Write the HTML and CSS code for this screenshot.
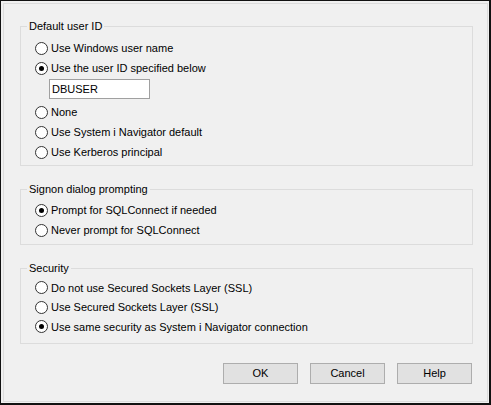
FILE: index.html
```html
<!DOCTYPE html>
<html>
<head>
<meta charset="utf-8">
<link rel="stylesheet" href="styles.css">
</head>
<body>
<div class="window">
  <div class="panel">
    <div class="group g1">
      <span class="legend">Default user ID</span>
      <div class="row"><span class="radio"></span><span>Use Windows user name</span></div>
      <div class="row"><span class="radio on"></span><span>Use the user ID specified below</span></div>
      <div class="textbox">DBUSER</div>
      <div class="row"><span class="radio"></span><span>None</span></div>
      <div class="row"><span class="radio"></span><span>Use System i Navigator default</span></div>
      <div class="row"><span class="radio"></span><span>Use Kerberos principal</span></div>
    </div>
    <div class="group g2">
      <span class="legend">Signon dialog prompting</span>
      <div class="row"><span class="radio on"></span><span>Prompt for SQLConnect if needed</span></div>
      <div class="row"><span class="radio"></span><span>Never prompt for SQLConnect</span></div>
    </div>
    <div class="group g3">
      <span class="legend">Security</span>
      <div class="row"><span class="radio"></span><span>Do not use Secured Sockets Layer (SSL)</span></div>
      <div class="row"><span class="radio"></span><span>Use Secured Sockets Layer (SSL)</span></div>
      <div class="row"><span class="radio on"></span><span>Use same security as System i Navigator connection</span></div>
    </div>
    <div class="buttons">
      <button class="btn">OK</button>
      <button class="btn">Cancel</button>
      <button class="btn">Help</button>
    </div>
  </div>
</div>
</body>
</html>
```
FILE: styles.css
```css
html, body {
  margin: 0;
  padding: 0;
  background: #f0f0f0;
}
.window {
  width: 491px;
  height: 405px;
  box-sizing: border-box;
  border-style: solid;
  border-color: #111;
  border-width: 1px 2px 2px 1px;
  background: #f0f0f0;
  font-family: "Liberation Sans", Arial, sans-serif;
  font-size: 11px;
  color: #000;
  display: flex;
}
.panel {
  flex: 1;
  margin: 2px 1px 1px 2px;
  border: 1px solid #dcdcdc;
  padding: 22px 14px 0 16px;
  display: flex;
  flex-direction: column;
}
.group {
  position: relative;
  border: 1px solid #dcdcdc;
  padding: 11px 0 3px 14px;
}
.group + .group {
  margin-top: 23px;
}
.g2 {
  padding-top: 10px;
  padding-bottom: 4px;
}
.g3 {
  padding-top: 9px;
  padding-bottom: 6px;
}
.g3 .row {
  height: 19.5px;
}
.legend {
  position: absolute;
  top: -7px;
  left: 6px;
  padding: 0 2px;
  line-height: 13px;
  background: #f0f0f0;
}
.row {
  display: flex;
  align-items: center;
  height: 20px;
}
.radio {
  width: 13px;
  height: 13px;
  box-sizing: border-box;
  border: 1px solid #333;
  border-radius: 50%;
  background: #fff;
  margin-right: 3px;
  position: relative;
  flex: none;
}
.radio.on::after {
  content: "";
  position: absolute;
  left: 3px;
  top: 3px;
  width: 5px;
  height: 5px;
  border-radius: 50%;
  background: #000;
}
.textbox {
  margin: 1px 0 3px 14px;
  width: 101px;
  height: 20px;
  box-sizing: border-box;
  border: 1px solid #a0a0a0;
  background: #fff;
  padding-left: 2px;
  line-height: 18px;
}
.buttons {
  display: flex;
  justify-content: flex-end;
  gap: 12px;
  margin-top: 19px;
  padding-right: 1px;
}
.btn {
  width: 75px;
  height: 21px;
  box-sizing: border-box;
  border: 1px solid #adadad;
  background: #e1e1e1;
  font-family: "Liberation Sans", Arial, sans-serif;
  font-size: 11px;
  color: #000;
  padding: 0;
  margin: 0;
}
```
